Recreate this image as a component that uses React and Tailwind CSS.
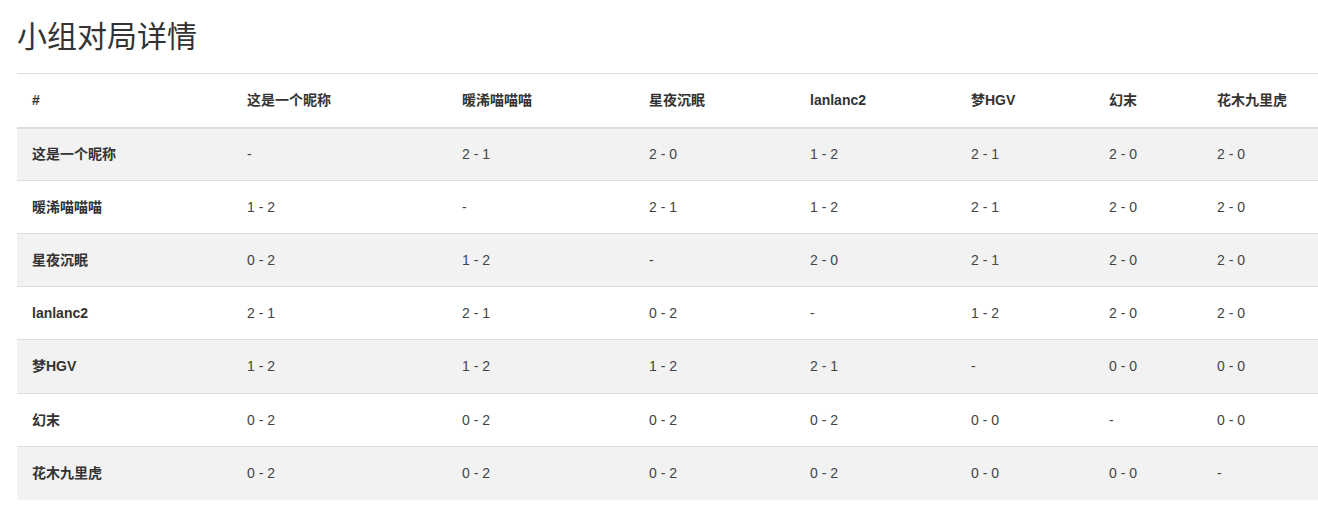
const players = ["这是一个昵称", "暖浠喵喵喵", "星夜沉眠", "lanlanc2", "梦HGV", "幻末", "花木九里虎"];

const results = [
  ["-", "2 - 1", "2 - 0", "1 - 2", "2 - 1", "2 - 0", "2 - 0"],
  ["1 - 2", "-", "2 - 1", "1 - 2", "2 - 1", "2 - 0", "2 - 0"],
  ["0 - 2", "1 - 2", "-", "2 - 0", "2 - 1", "2 - 0", "2 - 0"],
  ["2 - 1", "2 - 1", "0 - 2", "-", "1 - 2", "2 - 0", "2 - 0"],
  ["1 - 2", "1 - 2", "1 - 2", "2 - 1", "-", "0 - 0", "0 - 0"],
  ["0 - 2", "0 - 2", "0 - 2", "0 - 2", "0 - 0", "-", "0 - 0"],
  ["0 - 2", "0 - 2", "0 - 2", "0 - 2", "0 - 0", "0 - 0", "-"],
];

const widths = ["w-[215px]", "w-[215px]", "w-[187px]", "w-[161px]", "w-[161px]", "w-[138px]", "w-[108px]", "w-[116px]"];

export default function App() {
  return (
    <div
      className="bg-white pl-[17px] text-[#333] text-[14px]"
      style={{ fontFamily: '"Liberation Sans", Arial, "Noto Sans CJK SC", sans-serif' }}
    >
      <h2 className="pt-[20px] mb-[20px] text-[30px] leading-[33px] font-normal text-[#333]">
        小组对局详情
      </h2>
      <table className="table-fixed w-[1301px] border-collapse">
        <colgroup>
          {widths.map((w, i) => (
            <col key={i} className={w} />
          ))}
        </colgroup>
        <thead>
          <tr className="h-[54px] border-t border-[#ddd] border-b-2 border-b-[#ddd]">
            <th className="pl-[15px] text-left font-bold align-middle">#</th>
            {players.map((p) => (
              <th key={p} className="pl-[15px] text-left font-bold align-middle">
                {p}
              </th>
            ))}
          </tr>
        </thead>
        <tbody>
          {players.map((p, r) => (
            <tr
              key={p}
              className={
                (r === 4 ? "h-[54px] " : "h-[53px] ") +
                (r > 0 ? "border-t border-[#ddd] " : "") +
                (r % 2 === 0 ? "bg-[#f2f2f2]" : "bg-white")
              }
            >
              <th className="pl-[15px] text-left font-bold align-middle">{p}</th>
              {results[r].map((s, c) => (
                <td key={c} className="pl-[15px] text-left align-middle text-[#444]">
                  {s}
                </td>
              ))}
            </tr>
          ))}
        </tbody>
      </table>
    </div>
  );
}
